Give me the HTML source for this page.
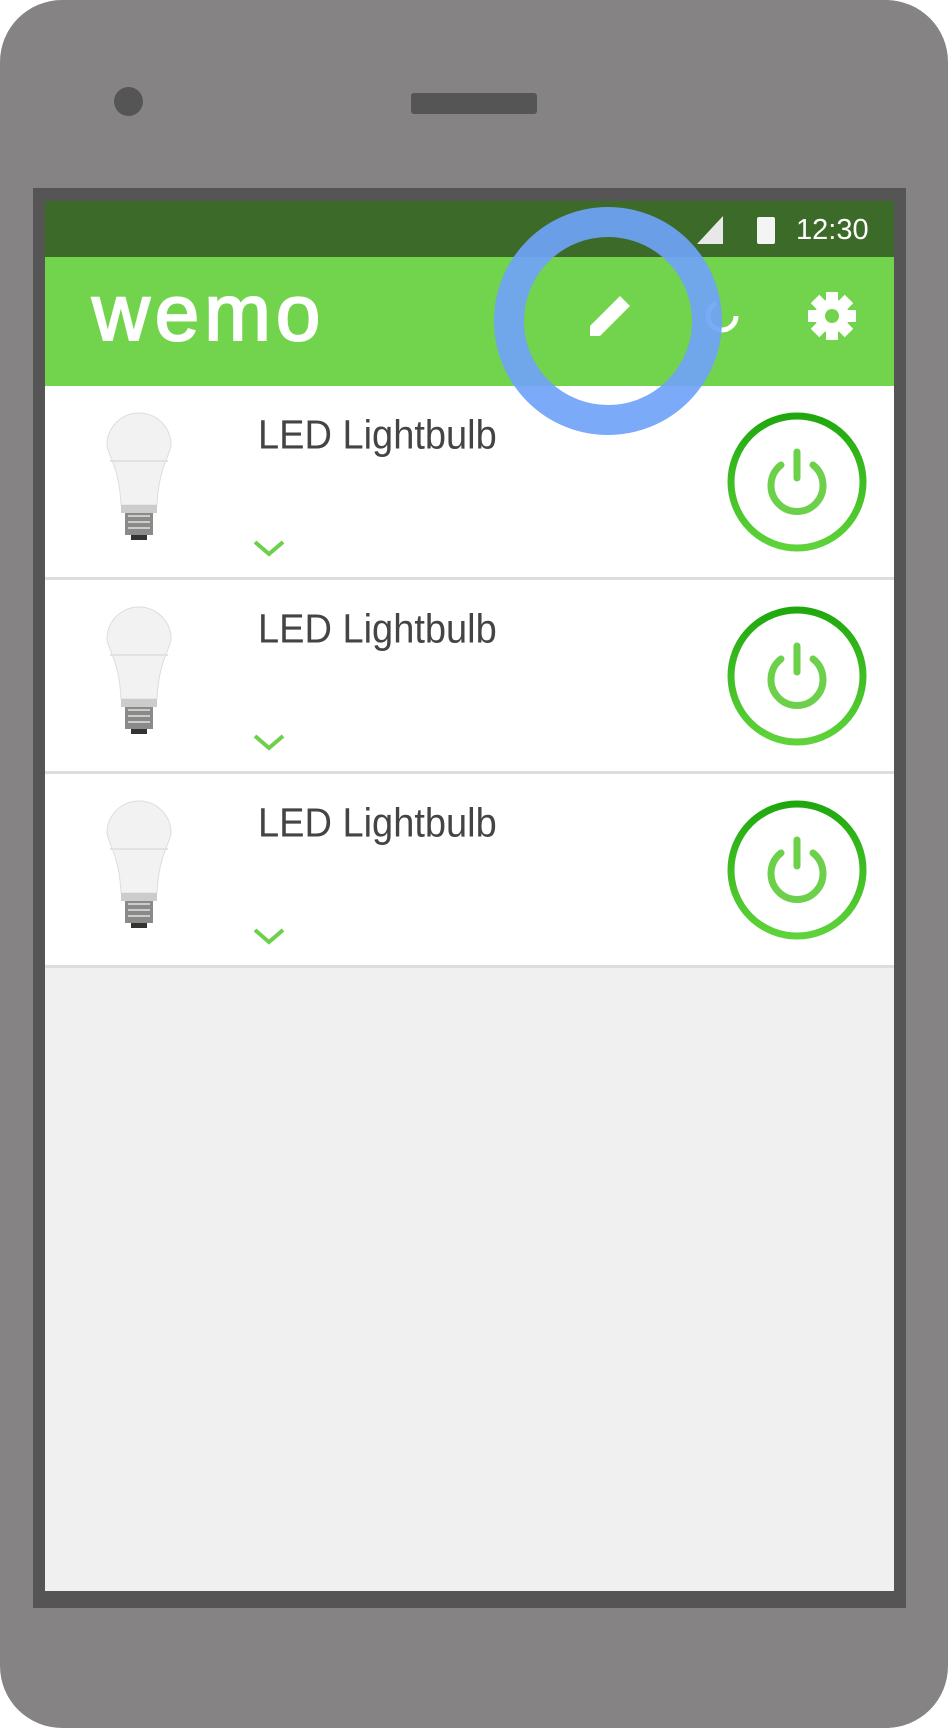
<!DOCTYPE html>
<html><head><style>
body{margin:0;width:948px;height:1728px;background:#fff;overflow:hidden;font-family:"Liberation Sans",sans-serif}
.ph{position:absolute;left:0;top:0;width:948px;height:1728px;background:#858384;border-radius:62px}
.abs{position:absolute}
.row{position:absolute;left:45px;width:849px;height:191px;background:#fff;border-bottom:3px solid #ddd}
.row .t{position:absolute;left:213px;top:27px;font-size:38px;color:#444;transform:scaleY(1.08);transform-origin:left top}
</style></head><body>
<div class="ph"></div>
<div class="abs" style="left:114px;top:87px;width:29px;height:29px;border-radius:50%;background:#555"></div>
<div class="abs" style="left:411px;top:93px;width:126px;height:21px;border-radius:3px;background:#555"></div>
<div class="abs" style="left:33px;top:188px;width:873px;height:1420px;background:#555"></div>
<div class="abs" style="left:45px;top:201px;width:849px;height:1390px;background:#f0f0f0"></div>
<div class="abs" style="left:45px;top:201px;width:849px;height:56px;background:#3c6a28"></div>
<div class="abs" style="left:45px;top:257px;width:849px;height:129px;background:#72d44c"></div>
<div class="abs" style="left:92px;top:270px;color:#fff;font-size:80px;letter-spacing:5px;line-height:86px;-webkit-text-stroke:2px #fff">wemo</div>
<div class="abs" style="left:796px;top:214px;color:#fff;font-size:29px">12:30</div>
<svg class="abs" style="left:0;top:0" width="948" height="1728">
<defs><linearGradient id="g" x1="0" y1="0" x2="0" y2="1"><stop offset="0" stop-color="#1fa80e"/><stop offset="1" stop-color="#5fd33a"/></linearGradient></defs>
<polygon points="697,244 723,216 723,244" fill="#e8e8e8"/>
<rect x="757" y="217" width="18" height="27" rx="2" fill="#f4f4f4"/>
<g transform="translate(610,316)" fill="#fff"><path d="M-20 20 L-20 10 L10 -20 L20 -10 L-10 20Z"/></g>
<circle cx="722" cy="316" r="14" fill="none" stroke="#fff" stroke-width="5" stroke-dasharray="60 30"/>
<g transform="translate(832,316)" fill="#fff"><circle r="17"/><g id="t"><rect x="-6" y="-24" width="12" height="48"/></g><use href="#t" transform="rotate(45)"/><use href="#t" transform="rotate(90)"/><use href="#t" transform="rotate(135)"/><circle r="7" fill="#72d44c"/></g>
</svg>
<div class="row" style="top:386px"><div class="t">LED Lightbulb</div></div>
<div class="row" style="top:580px"><div class="t">LED Lightbulb</div></div>
<div class="row" style="top:774px"><div class="t">LED Lightbulb</div></div>
<svg class="abs" style="left:0;top:0" width="948" height="1728">
<defs>
<g id="r">
<path d="M112 460 Q107 448 107 445 A32 32 0 0 1 171 445 Q171 448 166 460 Q158 480 157 505 L121 505 Q120 480 112 460Z" fill="#f2f2f2" stroke="#ddd"/>
<line x1="110" y1="461" x2="168" y2="461" stroke="#e2e2e2" stroke-width="2"/>
<rect x="121" y="505" width="36" height="8" fill="#ccc"/>
<rect x="125" y="513" width="28" height="22" fill="#8a8a88"/>
<path d="M128 516 h22 M128 522 h22 M128 528 h22" stroke="#ccc" stroke-width="2"/>
<rect x="131" y="535" width="16" height="5" fill="#333"/>
<path d="M255 542 L269 554 L283 542" stroke="#6dd04a" stroke-width="4" fill="none"/>
<circle cx="797" cy="482" r="66" fill="#fff" stroke="url(#g)" stroke-width="7"/>
<path d="M781 465 A26 26 0 1 0 813 465" stroke="#6dd04a" stroke-width="7" fill="none" stroke-linecap="round"/>
<line x1="797" y1="452" x2="797" y2="478" stroke="#6dd04a" stroke-width="7" stroke-linecap="round"/>
</g></defs>
<use href="#r"/><use href="#r" y="194"/><use href="#r" y="388"/>
<circle cx="608" cy="321" r="99" fill="none" stroke="#6fa3f7" stroke-opacity="0.92" stroke-width="30"/>
</svg>
</body></html>
